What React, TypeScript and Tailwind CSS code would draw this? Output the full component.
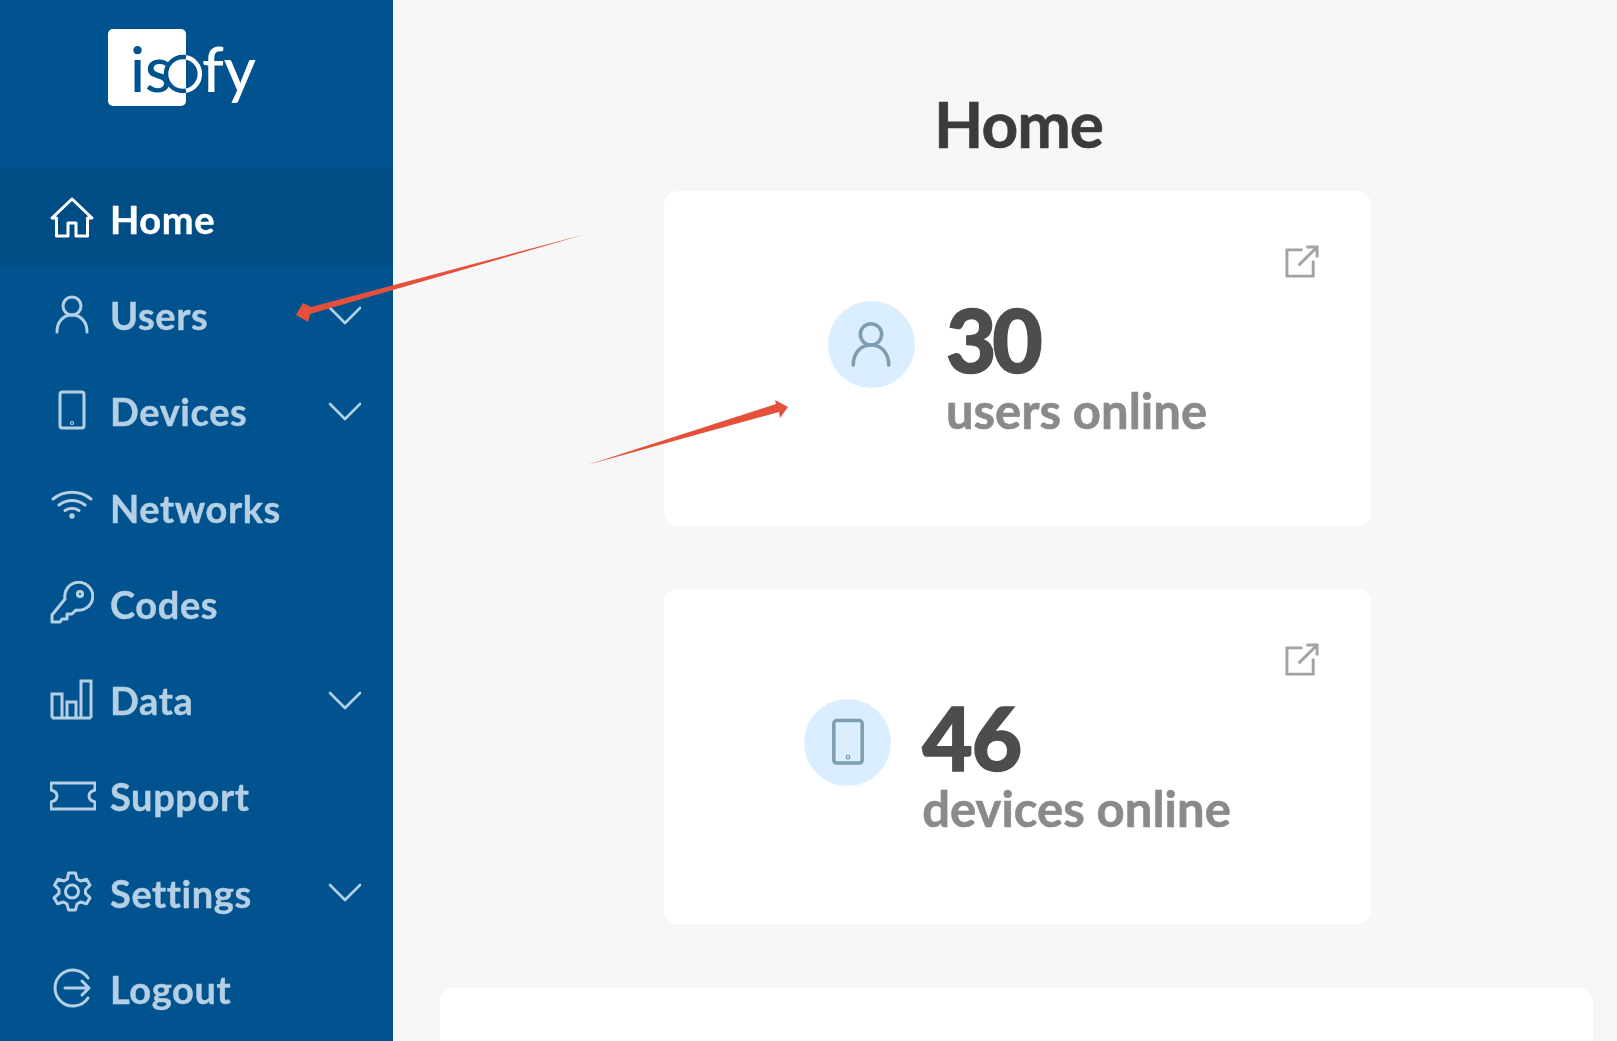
import React from "react";

const s = { fill: "none", stroke: "currentColor", strokeWidth: 3, strokeLinecap: "round" as const, strokeLinejoin: "round" as const };

const HomeIcon = () => (
  <svg width="44" height="44" viewBox="0 0 44 44" {...s}>
    <path d="M2 22 22 3l20 19h-4.500v18H26V27h-8v13H6.500V22z" />
  </svg>
);
const UserIcon = ({ size = 44 }: { size?: number }) => (
  <svg width={size} height={size} viewBox="0 0 44 44" {...s}>
    <circle cx="22" cy="13" r="9" />
    <path d="M7 39c0-10 6-17 15-17s15 7 15 17" />
  </svg>
);
const PhoneIcon = ({ size = 44 }: { size?: number }) => (
  <svg width={size} height={size} viewBox="0 0 44 44" {...s}>
    <rect x="10" y="3" width="24" height="36" rx="2.500" />
    <circle cx="22" cy="34" r="0.600" />
  </svg>
);
const WifiIcon = () => (
  <svg width="44" height="44" viewBox="0 0 44 44" {...s}>
    <path d="M3 14c11-9 27-9 38 0" />
    <path d="M9 20c8-6 18-6 26 0" />
    <path d="M15 25.500c4-3 10-3 14 0" />
    <circle cx="22" cy="31" r="1.200" fill="currentColor" />
  </svg>
);
const KeyIcon = () => (
  <svg width="44" height="44" viewBox="0 0 44 44" {...s}>
    <path d="M15 18a14 14 0 1 1 11 11l-4 4h-5v5h-5l-2 3H2v-7z" />
    <circle cx="30" cy="13" r="2.600" />
  </svg>
);
const DataIcon = () => (
  <svg width="44" height="44" viewBox="0 0 44 44" {...s} strokeLinejoin="miter" strokeLinecap="butt">
    <path d="M2 40V16h10v24M17 40V24h9v16M31 40V3h10v37M2 40h39" />
  </svg>
);
const TicketIcon = () => (
  <svg width="46" height="44" viewBox="0 0 46 44" {...s}>
    <path d="M1 9h44v7c-4 1-6 3-6 6s2 5 6 6v7H1v-7c4-1 6-3 6-6s-2-5-6-6z" />
  </svg>
);
const GearIcon = () => (
  <svg width="44" height="44" viewBox="0 0 44 44" {...s}>
    <path d="M18.500 3h7l1.500 6 3.500 2 6-1.800 3.500 6-4.500 4.300v4l4.500 4.300-3.500 6-6-1.800-3.500 2-1.500 6h-7l-1.500-6-3.500-2-6 1.800-3.500-6L9 23.500v-4l-4.500-4.300 3.500-6 6 1.800 3.500-2z" />
    <circle cx="22" cy="21.500" r="6.500" />
  </svg>
);
const LogoutIcon = () => (
  <svg width="44" height="44" viewBox="0 0 44 44" {...s}>
    <path d="M38 12a18 18 0 1 0 0 20" />
    <path d="M15 22h24M32 15l7 7-7 7" />
  </svg>
);
const Chevron = () => (
  <svg className="mt-[2px]" width="34" height="20" viewBox="0 0 34 20" fill="none" stroke="currentColor" strokeWidth="2.600" strokeLinecap="round" strokeLinejoin="round">
    <path d="M2 2l15 15L32 2" />
  </svg>
);
const ExternalIcon = () => (
  <svg width="35" height="35" viewBox="0 0 36 36" fill="none" stroke="#a3a3a3" strokeWidth="3">
    <path d="M18 6H2v27h27V17" />
    <path d="M14 22 33 3M22 3h11v11" />
  </svg>
);

const Logo = () => (
  <svg width="160" height="84" viewBox="0 0 160 84" className="block">
    <rect x="0" y="0" width="78" height="77" rx="5" fill="#ffffff" />
    <text x="22" y="63" fontFamily="Lato, sans-serif" fontSize="62" fontWeight="500" fill="#00538f">is</text>
    <circle cx="75" cy="45" r="17" fill="none" stroke="#00538f" strokeWidth="4.500" />
    <path d="M78 28.300a17 17 0 0 1 0 33.400" fill="none" stroke="#ffffff" strokeWidth="4.500" />
    <text x="94" y="63" fontFamily="Lato, sans-serif" fontSize="62" fontWeight="500" fill="#ffffff">fy</text>
  </svg>
);

const items = [
  { label: "Home", icon: <HomeIcon />, active: true },
  { label: "Users", icon: <UserIcon />, chevron: true },
  { label: "Devices", icon: <PhoneIcon />, chevron: true },
  { label: "Networks", icon: <WifiIcon /> },
  { label: "Codes", icon: <KeyIcon /> },
  { label: "Data", icon: <DataIcon />, chevron: true },
  { label: "Support", icon: <TicketIcon /> },
  { label: "Settings", icon: <GearIcon />, chevron: true },
  { label: "Logout", icon: <LogoutIcon /> },
];

const Card = ({ icon, value, label, numberClass }: { icon: React.ReactNode; value: string; label: string; numberClass: string }) => (
  <section className="relative flex h-[335px] w-[707px] shrink-0 items-center justify-center rounded-[14px] bg-white pt-[14px]">
    <div className="absolute right-[51px] top-[53px]">
      <ExternalIcon />
    </div>
    <div className="flex items-start gap-[31px]">
      <div className="mt-[6px] flex h-[87px] w-[87px] items-center justify-center rounded-full bg-[#dbeeff] text-[#7f9cb3]">{icon}</div>
      <div className="flex flex-col">
        <span className={`text-[87px] font-black leading-[90px] text-[#4d4d4d] [-webkit-text-stroke:1.5px_#4d4d4d] ${numberClass}`}>{value}</span>
        <span className="text-[49px] font-bold leading-[51px] tracking-normal text-[#8a8a8a] [-webkit-text-stroke:0.6px_#8a8a8a]">{label}</span>
      </div>
    </div>
  </section>
);

export default function App() {
  return (
    <div className="relative flex h-[1041px] w-full overflow-hidden bg-[#f7f7f7] font-['Lato',sans-serif] blur-[0.4px]">
      <aside className="flex w-[393px] shrink-0 flex-col bg-[#00538f]">
        <div className="flex h-[168px] shrink-0 items-start pl-[108px] pt-[29px]">
          <Logo />
        </div>
        <nav className="flex flex-col">
          {items.map((it) => (
            <div
              key={it.label}
              className={`flex shrink-0 items-center pl-[50px] pr-[31px] pt-[3px] ${it.active ? "h-[97px] bg-[#004c85] text-white" : "h-[96.250px] text-[#b5cfe4]"}`}
            >
              <div className="flex w-[60px] shrink-0 items-center">{it.icon}</div>
              <span className="flex-1 pt-[1px] text-[38px] font-bold leading-none tracking-[0.6px] [-webkit-text-stroke:0.4px_currentColor]">{it.label}</span>
              {it.chevron && <Chevron />}
            </div>
          ))}
        </nav>
      </aside>

      <main className="flex min-w-0 flex-1 flex-col items-center pl-[47px] pr-[24px]">
        <h1 className="ml-[4px] flex h-[191px] shrink-0 items-center pt-[56px] text-[64px] font-bold leading-none tracking-[-1px] text-[#3b3b3b] [-webkit-text-stroke:0.6px_#3b3b3b]">Home</h1>
        <div className="ml-[2px] flex shrink-0 flex-col gap-[63px]">
          <Card icon={<UserIcon size={52} />} value="30" label="users online" numberClass="tracking-[-4px]" />
          <Card icon={<PhoneIcon size={52} />} value="46" label="devices online" numberClass="tracking-[-1px]" />
        </div>
        <section className="mt-[64px] h-[200px] w-full shrink-0 rounded-[14px] bg-white" />
      </main>

      <svg className="pointer-events-none absolute left-0 top-0" width="1617" height="1041" viewBox="0 0 1617 1041">
        <polygon fill="#e5503a" points="586,234 311,307 303,303 296,315 308,322 310,314" />
        <polygon fill="#e5503a" points="587,465 776,404 775,400 788,407 780,418 779,412" />
      </svg>
    </div>
  );
}
